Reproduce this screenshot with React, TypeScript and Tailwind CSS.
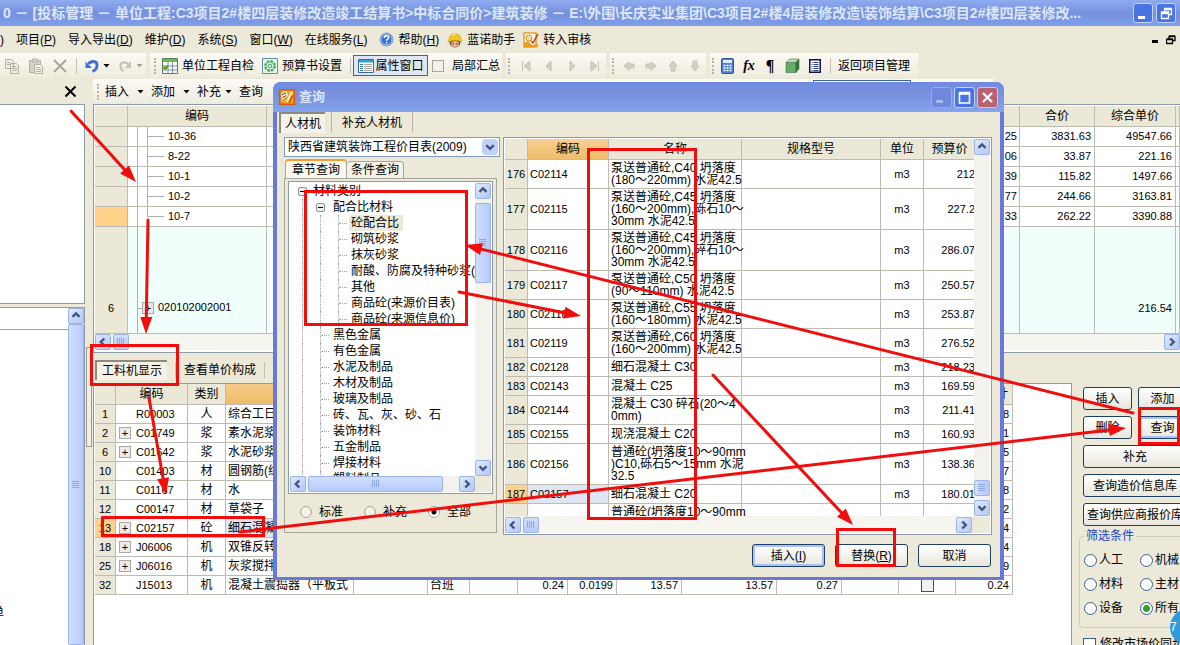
import { useState, type ReactNode } from "react";
import clsx from "clsx";

/** 上方清单表：编码 + 右侧两列价格 */
const BILL_ROWS = [
  { code: "10-36", tail: "25", total: "3831.63", unit: "49547.66" },
  { code: "8-22", tail: "06", total: "33.87", unit: "221.16" },
  { code: "10-1", tail: "39", total: "115.82", unit: "1497.66" },
  { code: "10-2", tail: "77", total: "244.66", unit: "3163.81" },
  { code: "10-7", tail: "33", total: "262.22", unit: "3390.88", active: true },
];

interface Resource {
  no: string;
  code: string;
  kind: string;
  name: string;
  qty: string;
  expandable?: boolean;
  active?: boolean;
}

const RESOURCES: Resource[] = [
  { no: "1", code: "R00003", kind: "人", name: "综合工日", qty: "8" },
  { no: "2", code: "C01749", kind: "浆", name: "素水泥浆", qty: "1", expandable: true },
  { no: "6", code: "C01642", kind: "浆", name: "水泥砂浆", qty: "5", expandable: true },
  { no: "10", code: "C01403", kind: "材", name: "圆钢筋(综合)", qty: "7" },
  { no: "11", code: "C01167", kind: "材", name: "水", qty: "8" },
  { no: "12", code: "C00147", kind: "材", name: "草袋子", qty: "2" },
  { no: "13", code: "C02157", kind: "砼", name: "细石混凝土", qty: "4", expandable: true, active: true },
  { no: "18", code: "J06006", kind: "机", name: "双锥反转出料", qty: "4", expandable: true },
  { no: "25", code: "J06016", kind: "机", name: "灰浆搅拌机", qty: "9", expandable: true },
  { no: "32", code: "J15013", kind: "机", name: "混凝土震捣器（平板式", qty: "0.24" },
];

const MATERIALS = [
  { no: "176", code: "C02114", lines: ["泵送普通砼,C40 坍落度", "(180～220mm) 水泥42.5"], price: "212" },
  { no: "177", code: "C02115", lines: ["泵送普通砼,C45 坍落度", "(160～200mm),砾石10～", "30mm 水泥42.5"], price: "227.2" },
  { no: "178", code: "C02116", lines: ["泵送普通砼,C45 坍落度", "(160～200mm),碎石10～", "30mm 水泥42.5"], price: "286.07" },
  { no: "179", code: "C02117", lines: ["泵送普通砼,C50 坍落度", "(90～110mm) 水泥42.5"], price: "250.57" },
  { no: "180", code: "C02118", lines: ["泵送普通砼,C55 坍落度", "(160～180mm) 水泥42.5"], price: "253.87" },
  { no: "181", code: "C02119", lines: ["泵送普通砼,C60 坍落度", "(160～200mm) 水泥42.5"], price: "276.52" },
  { no: "182", code: "C02128", lines: ["细石混凝土 C30"], price: "218.23" },
  { no: "183", code: "C02143", lines: ["混凝土 C25"], price: "169.59" },
  { no: "184", code: "C02144", lines: ["混凝土 C30 碎石(20～4", "0mm)"], price: "211.41" },
  { no: "185", code: "C02155", lines: ["现浇混凝土 C20"], price: "160.93" },
  { no: "186", code: "C02156", lines: ["普通砼(坍落度10～90mm", ")C10,砾石5～15mm 水泥", "32.5"], price: "138.36" },
  { no: "187", code: "C02157", lines: ["细石混凝土 C20"], price: "180.01", active: true },
  { no: "", code: "", lines: ["普通砼(坍落度10～90mm", ")C15"], price: "" },
];

const ROW_HEIGHT: Record<number, string> = { 1: "h-[19px]", 2: "h-[29px]", 3: "h-[41px]" };

const TREE = [
  { label: "材料类别", level: 0 },
  { label: "配合比材料", level: 1, open: true },
  { label: "砼配合比", level: 2 },
  { label: "砌筑砂浆", level: 2 },
  { label: "抹灰砂浆", level: 2 },
  { label: "耐酸、防腐及特种砂浆(", level: 2 },
  { label: "其他", level: 2 },
  { label: "商品砼(来源价目表)", level: 2 },
  { label: "商品砼(来源信息价)", level: 2 },
  { label: "黑色金属", level: 1 },
  { label: "有色金属", level: 1 },
  { label: "水泥及制品", level: 1 },
  { label: "木材及制品", level: 1 },
  { label: "玻璃及制品", level: 1 },
  { label: "砖、瓦、灰、砂、石", level: 1 },
  { label: "装饰材料", level: 1 },
  { label: "五金制品", level: 1 },
  { label: "焊接材料", level: 1 },
  { label: "塑料制品", level: 1 },
];

const CELL = "border-r border-b border-[#bdbbb2] p-0";
const HEAD = "border-r border-b border-[#bdbbb2] bg-[#ebe8d8] p-0 font-normal";

/* ---------- 小部件 ---------- */

function Grip() {
  return <span className="h-4 w-0 shrink-0 border-l-2 border-dotted border-[#b8b4a2]" />;
}

function Sep() {
  return <span className="h-4 w-px shrink-0 bg-[#c5c2b2]" />;
}

function Caret({ dim }: { dim?: boolean }) {
  return (
    <svg width="7" height="4" viewBox="0 0 7 4" className="shrink-0">
      <path d="M0.500 0h6L3.500 3.500z" fill={dim ? "#a5a295" : "#000"} />
    </svg>
  );
}

const CHEVRON = { up: "M4 9l4-4 4 4", down: "M4 6l4 4 4-4", left: "M9.500 4l-4 4 4 4", right: "M6 4l4 4-4 4" };

function ScrollButton({ dir, label }: { dir: keyof typeof CHEVRON; label: string }) {
  return (
    <button
      aria-label={label}
      className="flex size-4 shrink-0 items-center justify-center rounded-xs border border-[#9db4e8] bg-linear-to-br from-[#dfe9ff] to-[#b4c8f8]"
    >
      <svg width="14" height="14" viewBox="0 0 16 16">
        <path d={CHEVRON[dir]} fill="none" stroke="#41557f" strokeWidth="2.800" />
      </svg>
    </button>
  );
}

function Thumb({ className, vertical }: { className: string; vertical?: boolean }) {
  return (
    <span
      className={clsx(
        "flex shrink-0 items-center justify-center rounded-xs border border-[#9db4e8] from-[#d0defe] to-[#b7cbfa]",
        vertical ? "bg-linear-to-r" : "bg-linear-to-b",
        className,
      )}
    >
      <svg width="8" height="8" viewBox="0 0 8 8" shapeRendering="crispEdges">
        <path d={vertical ? "M0 .5h7M0 2.500h7M0 4.500h7M0 6.500h7" : "M.5 0v7M2.500 0v7M4.500 0v7M6.500 0v7"} stroke="#8ea8e4" />
      </svg>
    </span>
  );
}

function XpButton({ children, className, focus }: { children: ReactNode; className?: string; focus?: boolean }) {
  return (
    <button
      className={clsx(
        "h-[23px] shrink-0 rounded-[3px] border border-[#1d3f66] bg-linear-to-b from-white to-[#e8e6dc] text-center leading-5 whitespace-nowrap",
        focus && "shadow-[inset_0_0_0_2px_#a9c3f2]",
        className,
      )}
    >
      {children}
    </button>
  );
}

function WinButton({ kind, small, disabled }: { kind: "min" | "max" | "restore" | "close"; small?: boolean; disabled?: boolean }) {
  return (
    <button
      aria-label={kind}
      className={clsx(
        "flex shrink-0 items-center justify-center rounded-[3px] border",
        small ? "size-5" : "size-[21px]",
        kind === "close" ? "border-[#d9c3da] bg-[#b9626f]" : disabled ? "border-[#94a9ee] bg-[#6f88dc]" : "border-[#c3d2f8] bg-[#4a74e4]",
      )}
    >
      <svg width="15" height="15" viewBox="0 0 15 15" fill="none" stroke={disabled ? "#a9baf0" : "#fff"}>
        {kind === "min" && <path d="M2 11.500h7" strokeWidth="3" />}
        {kind === "max" && <path d="M2 2.500h11M2.500 2v11h10V2M2 4h11" strokeWidth="1.600" />}
        {kind === "restore" && <path d="M5.500 5V2.500h7v6H10M2.500 6h7v6.500h-7zM2.500 7.500h7M5.500 3.500h7" strokeWidth="1.300" />}
        {kind === "close" && <path d="M3 3l9 9M12 3l-9 9" strokeWidth="2.200" />}
      </svg>
    </button>
  );
}

function Radio({ name, label, flat, defaultChecked }: { name: string; label: string; flat?: boolean; defaultChecked?: boolean }) {
  return (
    <label className={clsx("flex shrink-0 items-center whitespace-nowrap", flat ? "gap-[7px]" : "gap-0.5")}>
      <input
        type="radio"
        name={name}
        defaultChecked={defaultChecked}
        className={clsx(
          "shrink-0 appearance-none rounded-full border",
          flat
            ? "size-3 border-[#a8a596] bg-[#f4f2e8] checked:bg-[radial-gradient(circle,#000_0_2px,#fff_3px)]"
            : "size-[13px] border-[#3c5f88] bg-white checked:bg-[radial-gradient(circle,#2ea32a_0_3px,#fff_4px)]",
        )}
      />
      {label}
    </label>
  );
}

function Key({ children }: { children: string }) {
  return (
    <>
      (<u>{children}</u>)
    </>
  );
}

/* ---------- 工具栏图标 ---------- */

const COPY = (
  <svg width="16" height="16" viewBox="0 0 16 16" fill="#f0eee4" stroke="#b4b1a3">
    <path d="M1.500 1.500h6l2 2v7h-8zM6.500 5.500h6l2 2v8h-8z" />
    <path d="M8 8.500h4M8 10.500h5M8 12.500h5M3 4.500h3M3 6.500h3" />
  </svg>
);
const PASTE = (
  <svg width="16" height="16" viewBox="0 0 16 16" fill="#d5d2c5" stroke="#b4b1a3">
    <path d="M1.500 2.500h11v12h-11z" />
    <path d="M4.500 1h5v3h-5z" />
    <path d="M6.500 6.500h6l2 2v7h-8z" fill="#f4f2ea" />
    <path d="M8 9.500h4M8 11.500h5M8 13.500h5" />
  </svg>
);
const CROSS = (
  <svg width="16" height="16" viewBox="0 0 16 16">
    <path d="M2 2l12 12M14 2L2 14" stroke="#a9a698" strokeWidth="2" />
  </svg>
);
const UNDO = (
  <svg width="14" height="14" viewBox="0 0 14 14">
    <path d="M3.500 5C6 1.500 12 1.500 12 6c0 3.500-2 5.500-4.500 6.500" fill="none" stroke="#3d6fd6" strokeWidth="2.800" />
    <path d="M.5 2.500v6.500h6.500z" fill="#3d6fd6" />
  </svg>
);
const REDO = (
  <svg width="14" height="14" viewBox="0 0 14 14">
    <path d="M10.500 5.500C8 2.500 2.500 2.500 2.500 7c0 2.500 1 4 3 5" fill="none" stroke="#c6c3b6" strokeWidth="2.200" />
    <path d="M13 2v7H7z" fill="#c6c3b6" />
  </svg>
);
const SHEET = (
  <svg width="16" height="16" viewBox="0 0 16 16">
    <path d="M.5.500h15v15H.5z" fill="#fff" stroke="#5d7f5f" />
    <path d="M1 1h14v3H1z" fill="#6bbd3b" />
    <path d="M1 8h14M1 12h14M6 4v11M10.500 4v11" stroke="#7a8f9c" />
    <path d="M1 7h5v5H1z" fill="#8bcf57" />
    <path d="M2 9l1.500 2L6 7.500" stroke="#1d6d1d" fill="none" />
  </svg>
);
const GEAR = (
  <svg width="16" height="16" viewBox="0 0 16 16" fill="none">
    <path d="M.5.500h15v15H.5z" fill="#e9f5ea" stroke="#5b8fa5" />
    <circle cx="8" cy="8" r="5" stroke="#4ba85a" strokeWidth="1.800" strokeDasharray="2.600 1.300" />
    <circle cx="8" cy="8" r="4" stroke="#67b871" />
    <circle cx="8" cy="8" r="1.800" stroke="#4ba85a" />
  </svg>
);
const PROPS = (
  <svg width="16" height="14" viewBox="0 0 16 14">
    <path d="M.5.500h15v13H.5z" fill="#fff" stroke="#33699c" />
    <path d="M1 1h14v2.500H1z" fill="#35a0d8" />
    <path d="M2 5.500h3M2 7.500h3M2 9.500h3M2 11.500h3" stroke="#3c78b4" />
    <path d="M6 5.500h8M6 7.500h8M6 9.500h8M6 11.500h8" stroke="#a5a79e" />
  </svg>
);
const CALC = (
  <svg width="13" height="16" viewBox="0 0 13 16">
    <rect x=".5" y=".5" width="12" height="15" rx="1.500" fill="#4d7ed0" stroke="#2e559c" />
    <path d="M2 2h9v3H2z" fill="#d9ecfb" />
    <path d="M2.500 7.500h8M2.500 10h8M2.500 12.500h8" stroke="#fff" strokeWidth="1.500" strokeDasharray="2 1" />
  </svg>
);
const CUBE = (
  <svg width="15" height="15" viewBox="0 0 15 15" stroke="#3b7040" strokeWidth=".6">
    <path d="M1 4.500h10v10H1z" fill="#63ad68" />
    <path d="M1 4.500L4.500 1H14l-3 3.500z" fill="#b8dfb6" />
    <path d="M11 4.500L14 1v9.500l-3 4z" fill="#2f7438" />
  </svg>
);
const LIST = (
  <svg width="12" height="14" viewBox="0 0 12 14">
    <path d="M.75.750h10.500v12.500H.75z" fill="#fff" stroke="#15153f" strokeWidth="1.500" />
    <path d="M2.500 3.500h1M2.500 5.500h1M2.500 7.500h1M2.500 9.500h1M2.500 11.500h1M4.500 3.500h5M4.500 5.500h5M4.500 7.500h5M4.500 9.500h5M4.500 11.500h5" stroke="#2f3f8e" />
  </svg>
);
const HELP = (
  <svg width="15" height="15" viewBox="0 0 15 15">
    <circle cx="7.500" cy="7.500" r="6.500" fill="#2f74d0" stroke="#7d9cc6" />
    <circle cx="7.500" cy="7.500" r="5.500" fill="none" stroke="#cfe2fa" strokeWidth=".8" />
    <path d="M5.300 6c0-3 4.500-3 4.500-.4 0 1.500-2.200 1.600-2.200 3.200M7.600 10v1.600" fill="none" stroke="#fff" strokeWidth="1.600" />
  </svg>
);
const WORKER = (
  <svg width="16" height="16" viewBox="0 0 16 16">
    <ellipse cx="8" cy="10.500" rx="5.500" ry="5" fill="#6d4a35" />
    <ellipse cx="8" cy="12" rx="4" ry="3" fill="#e8b58c" />
    <path d="M2 8C2-.5 14-.5 14 8c1.500 1.200 1 1.800 0 1.800-4-1.800-8-1.800-12 0-1 0-1.500-.6 0-1.800z" fill="#f6c51b" stroke="#c08d10" strokeWidth=".6" />
    <path d="M5 4c1-1.500 3-2 4-1.800" stroke="#fdf0a8" fill="none" />
    <path d="M6 11v1.500M10 11v1.500" stroke="#222" />
  </svg>
);
const AUDIT = (
  <svg width="16" height="16" viewBox="0 0 16 16">
    <path d="M1 1h12v14H1z" fill="#fff" stroke="#ee9b26" strokeWidth="1.500" />
    <path d="M1 11l4-2 4 4 6-1v3H1z" fill="#f09a1e" />
    <circle cx="6" cy="6" r="3" fill="#f8dca0" stroke="#e08f22" />
    <path d="M8 9l2 2 5-9" fill="none" stroke="#b3552b" strokeWidth="1.600" />
  </svg>
);
const APP = (
  <svg width="16" height="16" viewBox="0 0 16 16">
    <path d="M.75.750h14.500v14.500H.75z" fill="#f3a31d" stroke="#d9560d" strokeWidth="1.500" />
    <path d="M2 4l5-2 2 4-3 6-3-1z" fill="#fff3cf" />
    <path d="M3 5.500l4-1.500M3.500 8.500l4-2M4 11.500l3.500-3" stroke="#8b2a0c" fill="none" />
    <path d="M8 13l5-10" stroke="#fff3cf" strokeWidth="2" />
    <path d="M10 13.500l3.500-7" stroke="#b83c0c" strokeWidth="1.200" />
  </svg>
);

const NAV = ["M3.500 2v10M11 2v10L5 7z", "M9 2v10L4 7z", "M5 2v10l5-5z", "M3 2v10l6-5zM10.500 2v10"];
const MOVE = ["M7 3v2h5v4H7v2L2 7z", "M7 3v2H2v4h5v2l5-4z", "M3 7h2v5h4V7h2L7 2z", "M3 7h2V2h4v5h2l-4 5z"];

function DimIcon({ d, label }: { d: string; label: string }) {
  return (
    <button aria-label={label} className="shrink-0">
      <svg width="14" height="14" viewBox="0 0 14 14">
        <path d={d} fill="#d2cfc3" stroke="#c5c2b6" />
      </svg>
    </button>
  );
}

/* ---------- 主窗口 ---------- */

function TitleBar() {
  return (
    <header className="flex h-[26px] shrink-0 items-center justify-between gap-2 overflow-hidden bg-linear-to-b from-[#8fabf0] via-[#7691dd] to-[#7f9ee9] pl-[3px]">
      <h1 className="truncate text-sm font-bold whitespace-pre text-[#dce7fb]">
        {"0 － [投标管理 － 单位工程:C3项目2#楼四层装修改造竣工结算书>中标合同价>建筑装修 － E:\\外围\\长庆实业集团\\C3项目2#楼4层装修改造\\装饰结算\\C3项目2#楼四层装修改..."}
      </h1>
      <div className="flex shrink-0 gap-[3px] pr-1">
        <WinButton kind="min" small />
        <WinButton kind="restore" small />
      </div>
    </header>
  );
}

function MenuBar() {
  const menus = [
    ["项目", "P"],
    ["导入导出", "D"],
    ["维护", "D"],
    ["系统", "S"],
    ["窗口", "W"],
    ["在线服务", "L"],
  ];
  return (
    <nav className="flex h-[27px] shrink-0 items-center gap-3 overflow-hidden whitespace-nowrap">
      <span>)</span>
      {menus.map(([label, key]) => (
        <button key={label} className="shrink-0">
          {label}
          <Key>{key}</Key>
        </button>
      ))}
      <button className="flex shrink-0 items-center gap-1">
        {HELP}
        <span>
          帮助<Key>H</Key>
        </span>
      </button>
      <button className="-ml-1 flex shrink-0 items-center gap-1">
        {WORKER}
        蓝诺助手
      </button>
      <button className="-ml-1 flex shrink-0 items-center gap-1">
        {AUDIT}
        转入审核
      </button>
      <div className="ml-auto flex items-center gap-2 pr-1">
        <button aria-label="最小化" className="mt-1 h-[3px] w-1.5 bg-black" />
        <button aria-label="还原">
          <svg width="10" height="10" viewBox="0 0 10 10" fill="none" stroke="#000">
            <path d="M3 3.500V1.500h6v4H7M.5 4.500h6v4h-6zM.5 4h6M3 1h6" strokeWidth="1.300" />
          </svg>
        </button>
      </div>
    </nav>
  );
}

const SEG = "flex h-[25px] shrink-0 items-center bg-linear-to-b from-[#fbfaf5] to-[#eeebdd]";

function ToolBar() {
  return (
    <div className="flex h-[25px] shrink-0 items-center gap-1 overflow-hidden whitespace-nowrap">
      <div className={clsx(SEG, "w-[146px] gap-2 pl-1")}>
        <button aria-label="复制">{COPY}</button>
        <button aria-label="粘贴">{PASTE}</button>
        <button aria-label="删除">{CROSS}</button>
        <Sep />
        <button aria-label="撤销" className="flex items-center gap-1">{UNDO}<Caret /></button>
        <button aria-label="重做" className="flex items-center gap-1">{REDO}<Caret dim /></button>
      </div>
      <div className={clsx(SEG, "w-[352px] gap-2 pl-1")}>
        <Grip />
        <button className="-ml-0.5 flex items-center gap-1">{SHEET}单位工程自检</button>
        <button className="flex items-center gap-1">{GEAR}预算书设置</button>
        <span className="flex items-center gap-0.5">
          <Sep />
          <button className="flex h-[21px] w-[75px] items-center justify-center gap-0.5 border border-[#3c62a8] bg-[#dfe7f5]">
            {PROPS}属性窗口
          </button>
        </span>
        <label className="-ml-1 flex items-center gap-2">
          <input type="checkbox" className="size-3 appearance-none border border-[#a8a596] bg-[#f4f2e8]" />
          局部汇总
        </label>
      </div>
      <div className={clsx(SEG, "w-[100px] gap-[9px] pl-0.5")}>
        <Grip />
        {NAV.map((d, i) => <DimIcon key={d} d={d} label={`记录${i + 1}`} />)}
      </div>
      <div className={clsx(SEG, "w-[96px] gap-2 pl-0.5")}>
        <Grip />
        {MOVE.map((d, i) => <DimIcon key={d} d={d} label={`移动${i + 1}`} />)}
      </div>
      <div className={clsx(SEG, "w-[208px] gap-[9px] pl-0.5")}>
        <Grip />
        <button aria-label="计算器" className="-ml-0.5">{CALC}</button>
        <button className="w-3 font-['Liberation_Serif',serif] text-sm font-bold italic">fx</button>
        <button aria-label="段落" className="w-3 font-['Liberation_Serif',serif] text-base font-bold">¶</button>
        <button aria-label="模型">{CUBE}</button>
        <button aria-label="列表">{LIST}</button>
        <Sep />
        <button className="-ml-0.5">返回项目管理</button>
      </div>
    </div>
  );
}

function LeftPanels() {
  return (
    <aside className="flex w-[85px] shrink-0 flex-col">
      <div className="flex h-[25px] items-center justify-end pr-2">
        <button aria-label="关闭">
          <svg width="13" height="13" viewBox="0 0 13 13">
            <path d="M1.500 1.500l10 10M11.500 1.500l-10 10" stroke="#000" strokeWidth="2" />
          </svg>
        </button>
      </div>
      <div className="h-[200px] border-t border-r border-b border-[#8c9bab] bg-white" />
      <div className="mt-[3px] flex min-h-0 flex-1 border-t border-r border-[#8c9bab] bg-white">
        <div className="flex flex-1 flex-col justify-between">
          <div className="h-[22px] border-b border-[#a3a69f]" />
          <span className="-ml-2 pb-6">单</span>
        </div>
        <div className="flex w-4 flex-col bg-[#eef2fc]">
          <ScrollButton dir="up" label="向上" />
          <Thumb vertical className="flex-1" />
        </div>
      </div>
    </aside>
  );
}

function BillTable() {
  return (
    <div className="h-[248px] shrink-0 overflow-hidden border-t border-l border-[#8c9bab] bg-white pt-px pl-px">
      <table className="w-full table-fixed border-separate border-spacing-0">
        <colgroup>
          <col className="w-[33px]" />
          <col className="w-[139px]" />
          <col />
          <col className="w-[75px]" />
          <col className="w-[81px]" />
          <col className="w-1" />
        </colgroup>
        <thead>
          <tr className="h-[21px]">
            <th className={HEAD} />
            <th className={HEAD}>编码</th>
            <th className={HEAD} />
            <th className={HEAD}>合价</th>
            <th className={HEAD}>综合单价</th>
            <th className={HEAD} />
          </tr>
        </thead>
        <tbody>
          {BILL_ROWS.map((row) => (
            <tr key={row.code} className="h-5">
              <td className={clsx(CELL, row.active ? "bg-[#ffd18b]" : "bg-[#ebe8d8]")} />
              <td className={CELL}>
                <div className="flex h-[19px] items-center">
                  <span className="h-full w-[10px] border-r border-[#b0b0ac]" />
                  <span className={clsx("w-[10px] border-r border-[#b0b0ac]", row.active ? "h-[10px] self-start" : "h-full")} />
                  <span className="mr-1 h-px w-4 bg-[#b0b0ac]" />
                  <span className="text-[11px]">{row.code}</span>
                </div>
              </td>
              <td className={clsx(CELL, "pr-0.5 text-right text-[11px]")}>{row.tail}</td>
              <td className={clsx(CELL, "pr-[3px] text-right text-[11px]")}>{row.total}</td>
              <td className={clsx(CELL, "pr-[3px] text-right text-[11px]")}>{row.unit}</td>
              <td className={CELL} />
            </tr>
          ))}
          <tr className="h-[107px] bg-[#f0fffc]">
            <td className={clsx(CELL, "bg-[#ebe8d8] pt-14 text-center text-[11px]")}>6</td>
            <td className={CELL}>
              <div className="flex h-[106px]">
                <span className="h-full w-[10px] border-r border-[#b0b0ac]" />
                <span className="mt-[81px] h-px w-1 bg-[#b0b0ac]" />
                <button aria-label="展开" className="mt-[75px] size-3 border border-[#a8a8a8] bg-[#e9e9e9] text-[11px] leading-[10px]">+</button>
                <span className="mt-[73px] ml-1 text-[11px]">020102002001</span>
              </div>
            </td>
            <td className={CELL} />
            <td className={CELL} />
            <td className={clsx(CELL, "pt-14 pr-[3px] text-right text-[11px]")}>216.54</td>
            <td className={CELL} />
          </tr>
        </tbody>
      </table>
      <div className="flex h-4 items-center justify-between bg-[#f6f5f0]">
        <div className="flex gap-0.5">
          <ScrollButton dir="left" label="向左" />
          <Thumb className="h-4 w-4" />
        </div>
        <ScrollButton dir="right" label="向右" />
      </div>
    </div>
  );
}

function ResourceTable() {
  return (
    <div className="min-h-0 flex-1 overflow-hidden border-t border-r border-l border-[#8c9bab] bg-white pl-px">
      <table className="w-[918px] table-fixed border-separate border-spacing-0">
        <colgroup>
          <col className="w-[21px]" />
          <col className="w-[72px]" />
          <col className="w-[38px]" />
          <col className="w-[128px]" />
          <col className="w-[74px]" />
          <col className="w-[42px]" />
          <col className="w-[48px]" />
          <col className="w-[50px]" />
          <col className="w-[49px]" />
          <col className="w-[65px]" />
          <col className="w-[95px]" />
          <col className="w-[65px]" />
          <col className="w-[57px]" />
          <col className="w-[57px]" />
          <col className="w-[57px]" />
        </colgroup>
        <thead>
          <tr className="h-[21px]">
            <th className={HEAD} />
            <th className={HEAD}>编码</th>
            <th className={HEAD}>类别</th>
            <th className="border-r border-b border-[#bdbbb2] bg-linear-to-b from-[#f7c988] to-[#eebd68] p-0 font-normal" />
            {Array.from({ length: 10 }, (_, i) => <th key={i} className={HEAD} />)}
            <th className={clsx(HEAD, "pr-1 text-right")}>合计</th>
          </tr>
        </thead>
        <tbody>
          {RESOURCES.map((r) => {
            const last = r.no === "32";
            return (
              <tr key={r.no} className="h-[19px]">
                <td className={clsx(CELL, "text-center text-[11px]", r.active ? "bg-[#ffd18b]" : "bg-[#ebe8d8]")}>{r.no}</td>
                <td className={CELL}>
                  <div className="flex items-center gap-[5px] pl-[3px]">
                    {r.expandable ? (
                      <button aria-label="展开" className="size-3 border border-[#a8a8a8] bg-[#ececec] text-[11px] leading-[10px]">+</button>
                    ) : (
                      <span className="size-3" />
                    )}
                    <span className="text-[11px] leading-4">{r.code}</span>
                  </div>
                </td>
                <td className={clsx(CELL, "text-center")}>{r.kind}</td>
                <td className={clsx(CELL, "overflow-hidden pl-0.5 whitespace-nowrap", r.active && "bg-[#dfe5f3]")}>{r.name}</td>
                <td className={CELL} />
                <td className={clsx(CELL, "pl-0.5")}>{last && "台班"}</td>
                <td className={CELL} />
                <td className={clsx(CELL, "pr-[3px] text-right text-[11px]")}>{last && "0.24"}</td>
                <td className={clsx(CELL, "pr-[3px] text-right text-[11px]")}>{last && "0.0199"}</td>
                <td className={clsx(CELL, "pr-[3px] text-right text-[11px]")}>{last && "13.57"}</td>
                <td className={clsx(CELL, "pr-[3px] text-right text-[11px]")}>{last && "13.57"}</td>
                <td className={clsx(CELL, "pr-[3px] text-right text-[11px]")}>{last && "0.27"}</td>
                <td className={CELL} />
                <td className={clsx(CELL, "text-center")}>
                  {last && (
                    <input type="checkbox" aria-label="是否暂估" className="mx-auto block size-[13px] appearance-none border border-[#2b5680] bg-[#eef1ef]" />
                  )}
                </td>
                <td className={clsx(CELL, "pr-[3px] text-right text-[11px]")}>{r.qty}</td>
              </tr>
            );
          })}
        </tbody>
      </table>
    </div>
  );
}

function SidePanel() {
  return (
    <aside className="w-[108px] shrink-0 overflow-hidden pt-0.5 pl-[11px]">
      <div className="flex w-[112px] flex-col gap-1.5">
        <div className="flex gap-1.5">
          <XpButton className="w-[49px]">插入</XpButton>
          <XpButton className="w-[49px]">添加</XpButton>
        </div>
        <div className="flex gap-1.5">
          <XpButton className="w-[49px]">删除</XpButton>
          <XpButton className="w-[49px]" focus>查询</XpButton>
        </div>
        <XpButton className="w-[104px]">补充</XpButton>
        <XpButton className="w-[104px]">查询造价信息库</XpButton>
        <XpButton className="w-[104px]">查询供应商报价库</XpButton>
      </div>
      <fieldset className="-ml-1 h-[102px] w-[140px] rounded border border-[#cfccba] pl-1">
        <legend className="px-0.5 leading-5 text-[#1446c4]">筛选条件</legend>
        <div className="grid grid-cols-[56px_56px] gap-y-2 pt-1.5">
          <Radio name="filter" label="人工" />
          <Radio name="filter" label="机械" />
          <Radio name="filter" label="材料" />
          <Radio name="filter" label="主材" />
          <Radio name="filter" label="设备" />
          <Radio name="filter" label="所有" defaultChecked />
        </div>
      </fieldset>
      <label className="flex items-center gap-1 pt-2 whitespace-nowrap">
        <input type="checkbox" className="size-[13px] shrink-0 appearance-none border border-[#3c5f88] bg-white" />
        修改市场价同步
      </label>
    </aside>
  );
}

function Workspace() {
  return (
    <main className="flex min-w-0 flex-1 flex-col">
      <div className="flex h-[25px] w-[900px] shrink-0 items-center gap-[7px] bg-linear-to-b from-[#fbfaf5] to-[#eeebdd] pl-1">
        <Grip />
        <button className="-ml-px flex items-center gap-2">插入<Caret /></button>
        <button className="flex items-center gap-2">添加<Caret /></button>
        <button className="flex items-center gap-1">补充<Caret /></button>
        <button>查询</button>
        <input aria-label="定位" className="mt-px mr-[82px] ml-auto h-5 w-[98px] self-start border border-[#3c62a8] bg-white" />
      </div>
      <BillTable />
      <div className="flex min-h-0 flex-1 border-t border-[#8c9bab]">
        <div className="flex min-w-0 flex-1 flex-col">
          <div className="flex h-[30px] shrink-0 items-center gap-2 pt-1 pl-0.5">
            <button className="h-5 w-[72px] border-t-2 border-l-2 border-[#8d8b7e] bg-[#f4f2e9] leading-4">工料机显示</button>
            <Sep />
            <button>查看单价构成</button>
            <Sep />
          </div>
          <ResourceTable />
        </div>
        <div className="flex pt-8">
          <SidePanel />
        </div>
      </div>
    </main>
  );
}

/* ---------- 查询对话框 ---------- */

function MaterialTree() {
  const [selected, setSelected] = useState("砼配合比");
  return (
    <div className="flex h-[313px] flex-col border border-[#8c9bab] bg-white p-px">
      <div className="flex min-h-0 flex-1">
        <ul className="min-w-0 flex-1 overflow-hidden pl-2">
          {TREE.map(({ label, level, open }) => (
            <li key={label} className="flex h-4 items-center whitespace-nowrap">
              {level > 0 && <span className="ml-1 h-4 w-[18px] shrink-0 border-l border-dotted border-[#a0a0a0]" />}
              {level > 1 && <span className="h-4 w-[18px] shrink-0 border-l border-dotted border-[#a0a0a0]" />}
              {open || level === 0 ? (
                <button aria-label="收起" className={clsx("mr-1 size-[9px] shrink-0 rounded-xs border border-[#7f94ad] bg-[#f1efe6] p-px", open && "-ml-1 mr-1.5")}>
                  <span className="mx-auto block h-px w-[5px] bg-black" />
                </button>
              ) : (
                <span className="flex h-4 w-[11px] shrink-0 items-center border-l border-dotted border-[#a0a0a0]">
                  <span className="w-2 border-t border-dotted border-[#a0a0a0]" />
                </span>
              )}
              <button
                onClick={() => setSelected(label)}
                className={clsx("px-0.5 leading-4", selected === label && "bg-[#ece9d8] pr-1")}
              >
                {label}
              </button>
            </li>
          ))}
        </ul>
        <div className="flex w-4 flex-col bg-[#f3f2ec]">
          <ScrollButton dir="up" label="向上" />
          <Thumb vertical className="mt-1 h-20" />
          <span className="flex-1" />
          <ScrollButton dir="down" label="向下" />
        </div>
      </div>
      <div className="flex h-4 items-center bg-[#f3f2ec]">
        <ScrollButton dir="left" label="向左" />
        <Thumb className="ml-0.5 h-4 w-[135px]" />
        <span className="flex-1" />
        <ScrollButton dir="right" label="向右" />
        <span className="h-4 w-4 bg-[#ece9d8]" />
      </div>
    </div>
  );
}

function MaterialGrid() {
  return (
    <div className="flex h-[398px] min-w-0 flex-1 flex-col border border-[#8c9bab] bg-white p-px">
      <div className="flex min-h-0 flex-1">
        <div className="min-w-0 flex-1 overflow-hidden">
          <table className="w-[471px] table-fixed border-separate border-spacing-0">
            <colgroup>
              <col className="w-[23px]" />
              <col className="w-[81px]" />
              <col className="w-[133px]" />
              <col className="w-[139px]" />
              <col className="w-[43px]" />
              <col />
            </colgroup>
            <thead>
              <tr className="h-[21px]">
                <th className={HEAD} />
                <th className="border-r border-b border-[#bdbbb2] bg-linear-to-b from-[#f9cf92] to-[#eebd68] p-0 font-normal">编码</th>
                <th className={HEAD}>名称</th>
                <th className={HEAD}>规格型号</th>
                <th className={HEAD}>单位</th>
                <th className={HEAD}>预算价</th>
              </tr>
            </thead>
            <tbody>
              {MATERIALS.map((m, i) => (
                <tr key={i} className={ROW_HEIGHT[m.lines.length]}>
                  <td className={clsx(CELL, "text-center text-[11px] leading-3", m.active ? "bg-[#ffd18b]" : "bg-[#ebe8d8]")}>{m.no}</td>
                  <td className={clsx(CELL, "pl-0.5 text-[11px] leading-3", m.active && "bg-[#dfe5f3]")}>{m.code}</td>
                  <td className={clsx(CELL, "pl-0.5 leading-3 whitespace-nowrap")}>
                    {m.lines.map((line) => (
                      <span key={line} className="block">{line}</span>
                    ))}
                  </td>
                  <td className={CELL} />
                  <td className={clsx(CELL, "text-center text-[11px] leading-3")}>{m.no && "m3"}</td>
                  <td className={clsx(CELL, "text-right text-[11px] leading-3")}>{m.price}</td>
                </tr>
              ))}
            </tbody>
          </table>
        </div>
        <div className="flex w-4 shrink-0 flex-col bg-[#f3f2ec]">
          <ScrollButton dir="up" label="向上" />
          <span className="flex-1" />
          <Thumb vertical className="mb-1 h-4" />
          <ScrollButton dir="down" label="向下" />
        </div>
      </div>
      <div className="flex h-[17px] items-center bg-[#f6f5f0]">
        <ScrollButton dir="left" label="向左" />
        <Thumb className="ml-0.5 h-4 w-4" />
        <span className="flex-1" />
        <ScrollButton dir="right" label="向右" />
        <span className="h-4 w-[18px] bg-[#ece9d8]" />
      </div>
    </div>
  );
}

function QueryDialog() {
  return (
    <section
      role="dialog"
      aria-label="查询"
      className="absolute top-[82px] left-[273px] flex w-[731px] flex-col rounded-t-lg bg-[#6a78d8] pr-1 pb-[3px] pl-1"
    >
      <header className="-mx-1 flex h-[30px] items-center gap-1 rounded-t-lg bg-linear-to-b from-[#6f8ae0] via-[#7a94de] to-[#83a4ee] pr-1.5 pl-1.5">
        {APP}
        <h2 className="text-[13px] font-bold text-[#dce7fb]">查询</h2>
        <div className="ml-auto flex gap-0.5">
          <WinButton kind="min" disabled />
          <WinButton kind="max" />
          <WinButton kind="close" />
        </div>
      </header>
      <div className="bg-[#ece9d8] pb-2.5">
        <div className="flex h-[25px] items-start gap-1.5 pl-0.5">
          <button className="h-[21px] w-[46px] border-t-2 border-l-2 border-[#8d8b7e] bg-[#f4f2e9] leading-4">人材机</button>
          <span className="h-5 w-px bg-[#b5b2a3]" />
          <button className="h-[21px] w-[68px] leading-4">补充人材机</button>
          <span className="h-5 w-px bg-[#b5b2a3]" />
        </div>
        <div className="flex gap-[3px] pr-2 pl-[7px]">
          <div className="w-[216px] shrink-0">
            <div className="relative">
              <select aria-label="价目表" className="h-5 w-full appearance-none border border-[#7f9db9] bg-white pl-[3px]">
                <option>陕西省建筑装饰工程价目表(2009)</option>
              </select>
              <span className="pointer-events-none absolute top-0.5 right-0.5 flex size-4 items-center justify-center rounded-sm bg-[#bfd0f9]">
                <svg width="12" height="12" viewBox="0 0 16 16">
                  <path d="M3 5.500l5 5 5-5" fill="none" stroke="#41557f" strokeWidth="3" />
                </svg>
              </span>
            </div>
            <div className="mt-0.5 flex items-end pl-px">
              <button className="h-[19px] w-[62px] rounded-t-sm border-t-2 border-r border-l border-[#a3a79c] border-t-[#f0a030] bg-[#f8f7f0] leading-4">
                章节查询
              </button>
              <button className="h-[17px] w-[57px] rounded-t-sm border-t border-r border-[#a3a79c] bg-[#f4f3ea] leading-4">条件查询</button>
            </div>
            <div className="mr-[3px] border border-[#a3a79c] bg-[#ece9d8] px-[3px] pt-0.5 pb-3">
              <MaterialTree />
              <div className="flex h-[26px] items-end gap-[21px] pl-3">
                <Radio name="source" label="标准" flat />
                <Radio name="source" label="补充" flat />
                <Radio name="source" label="全部" flat defaultChecked />
              </div>
            </div>
          </div>
          <MaterialGrid />
        </div>
        <div className="flex justify-end gap-2.5 pt-[9px] pr-[9px]">
          <XpButton className="w-[73px]" focus>
            插入<Key>I</Key>
          </XpButton>
          <XpButton className="w-[73px]">
            替换<Key>R</Key>
          </XpButton>
          <XpButton className="w-[73px]">取消</XpButton>
        </div>
      </div>
    </section>
  );
}

/* ---------- 红色标注 ---------- */

function Arrow({ from, to }: { from: [number, number]; to: [number, number] }) {
  const [x1, y1] = from;
  const [x2, y2] = to;
  const len = Math.hypot(x2 - x1, y2 - y1);
  const ux = (x2 - x1) / len;
  const uy = (y2 - y1) / len;
  const bx = x2 - ux * 17;
  const by = y2 - uy * 17;
  return (
    <>
      <line x1={x1} y1={y1} x2={bx} y2={by} strokeWidth="3" strokeLinecap="round" />
      <polygon points={`${x2},${y2} ${bx - uy * 6},${by + ux * 6} ${bx + uy * 6},${by - ux * 6}`} stroke="none" fill="#f20d0d" />
    </>
  );
}

function Annotations() {
  return (
    <svg className="pointer-events-none absolute inset-0 h-full w-full" fill="none" stroke="#f20d0d" strokeWidth="3">
      <rect x="91.500" y="345.500" width="86" height="39" />
      <rect x="102.500" y="517.500" width="161" height="18" />
      <rect x="305.500" y="191.500" width="161" height="133" />
      <rect x="588.500" y="149.500" width="107" height="369" />
      <rect x="837.500" y="529.500" width="57" height="36" />
      <rect x="1139.500" y="408.500" width="39" height="35" />
      <Arrow from={[71, 111]} to={[136, 182]} />
      <Arrow from={[148, 220]} to={[146, 334]} />
      <Arrow from={[149, 398]} to={[166, 495]} />
      <Arrow from={[1133, 413]} to={[465, 245]} />
      <Arrow from={[459, 292]} to={[581, 316]} />
      <Arrow from={[713, 375]} to={[853, 525]} />
      <Arrow from={[240, 532]} to={[1126, 428]} />
    </svg>
  );
}

export default function App() {
  return (
    <div className="relative flex h-screen flex-col overflow-hidden bg-[#ece9d8] font-['Liberation_Sans','Noto_Sans_CJK_SC',sans-serif] text-xs text-black">
      <TitleBar />
      <MenuBar />
      <ToolBar />
      <div className="flex min-h-0 flex-1 pt-px">
        <LeftPanels />
        <div className="flex w-2 shrink-0 flex-col pt-[268px]">
          <span className="ml-px h-[100px] w-1.5 border border-[#9b9a8e] bg-[#f1efe5]" />
        </div>
        <Workspace />
      </div>
      <QueryDialog />
      <button className="absolute right-[-26px] bottom-0 size-9 rounded-full bg-[#2f9bd8] text-left text-white">7</button>
      <Annotations />
    </div>
  );
}
